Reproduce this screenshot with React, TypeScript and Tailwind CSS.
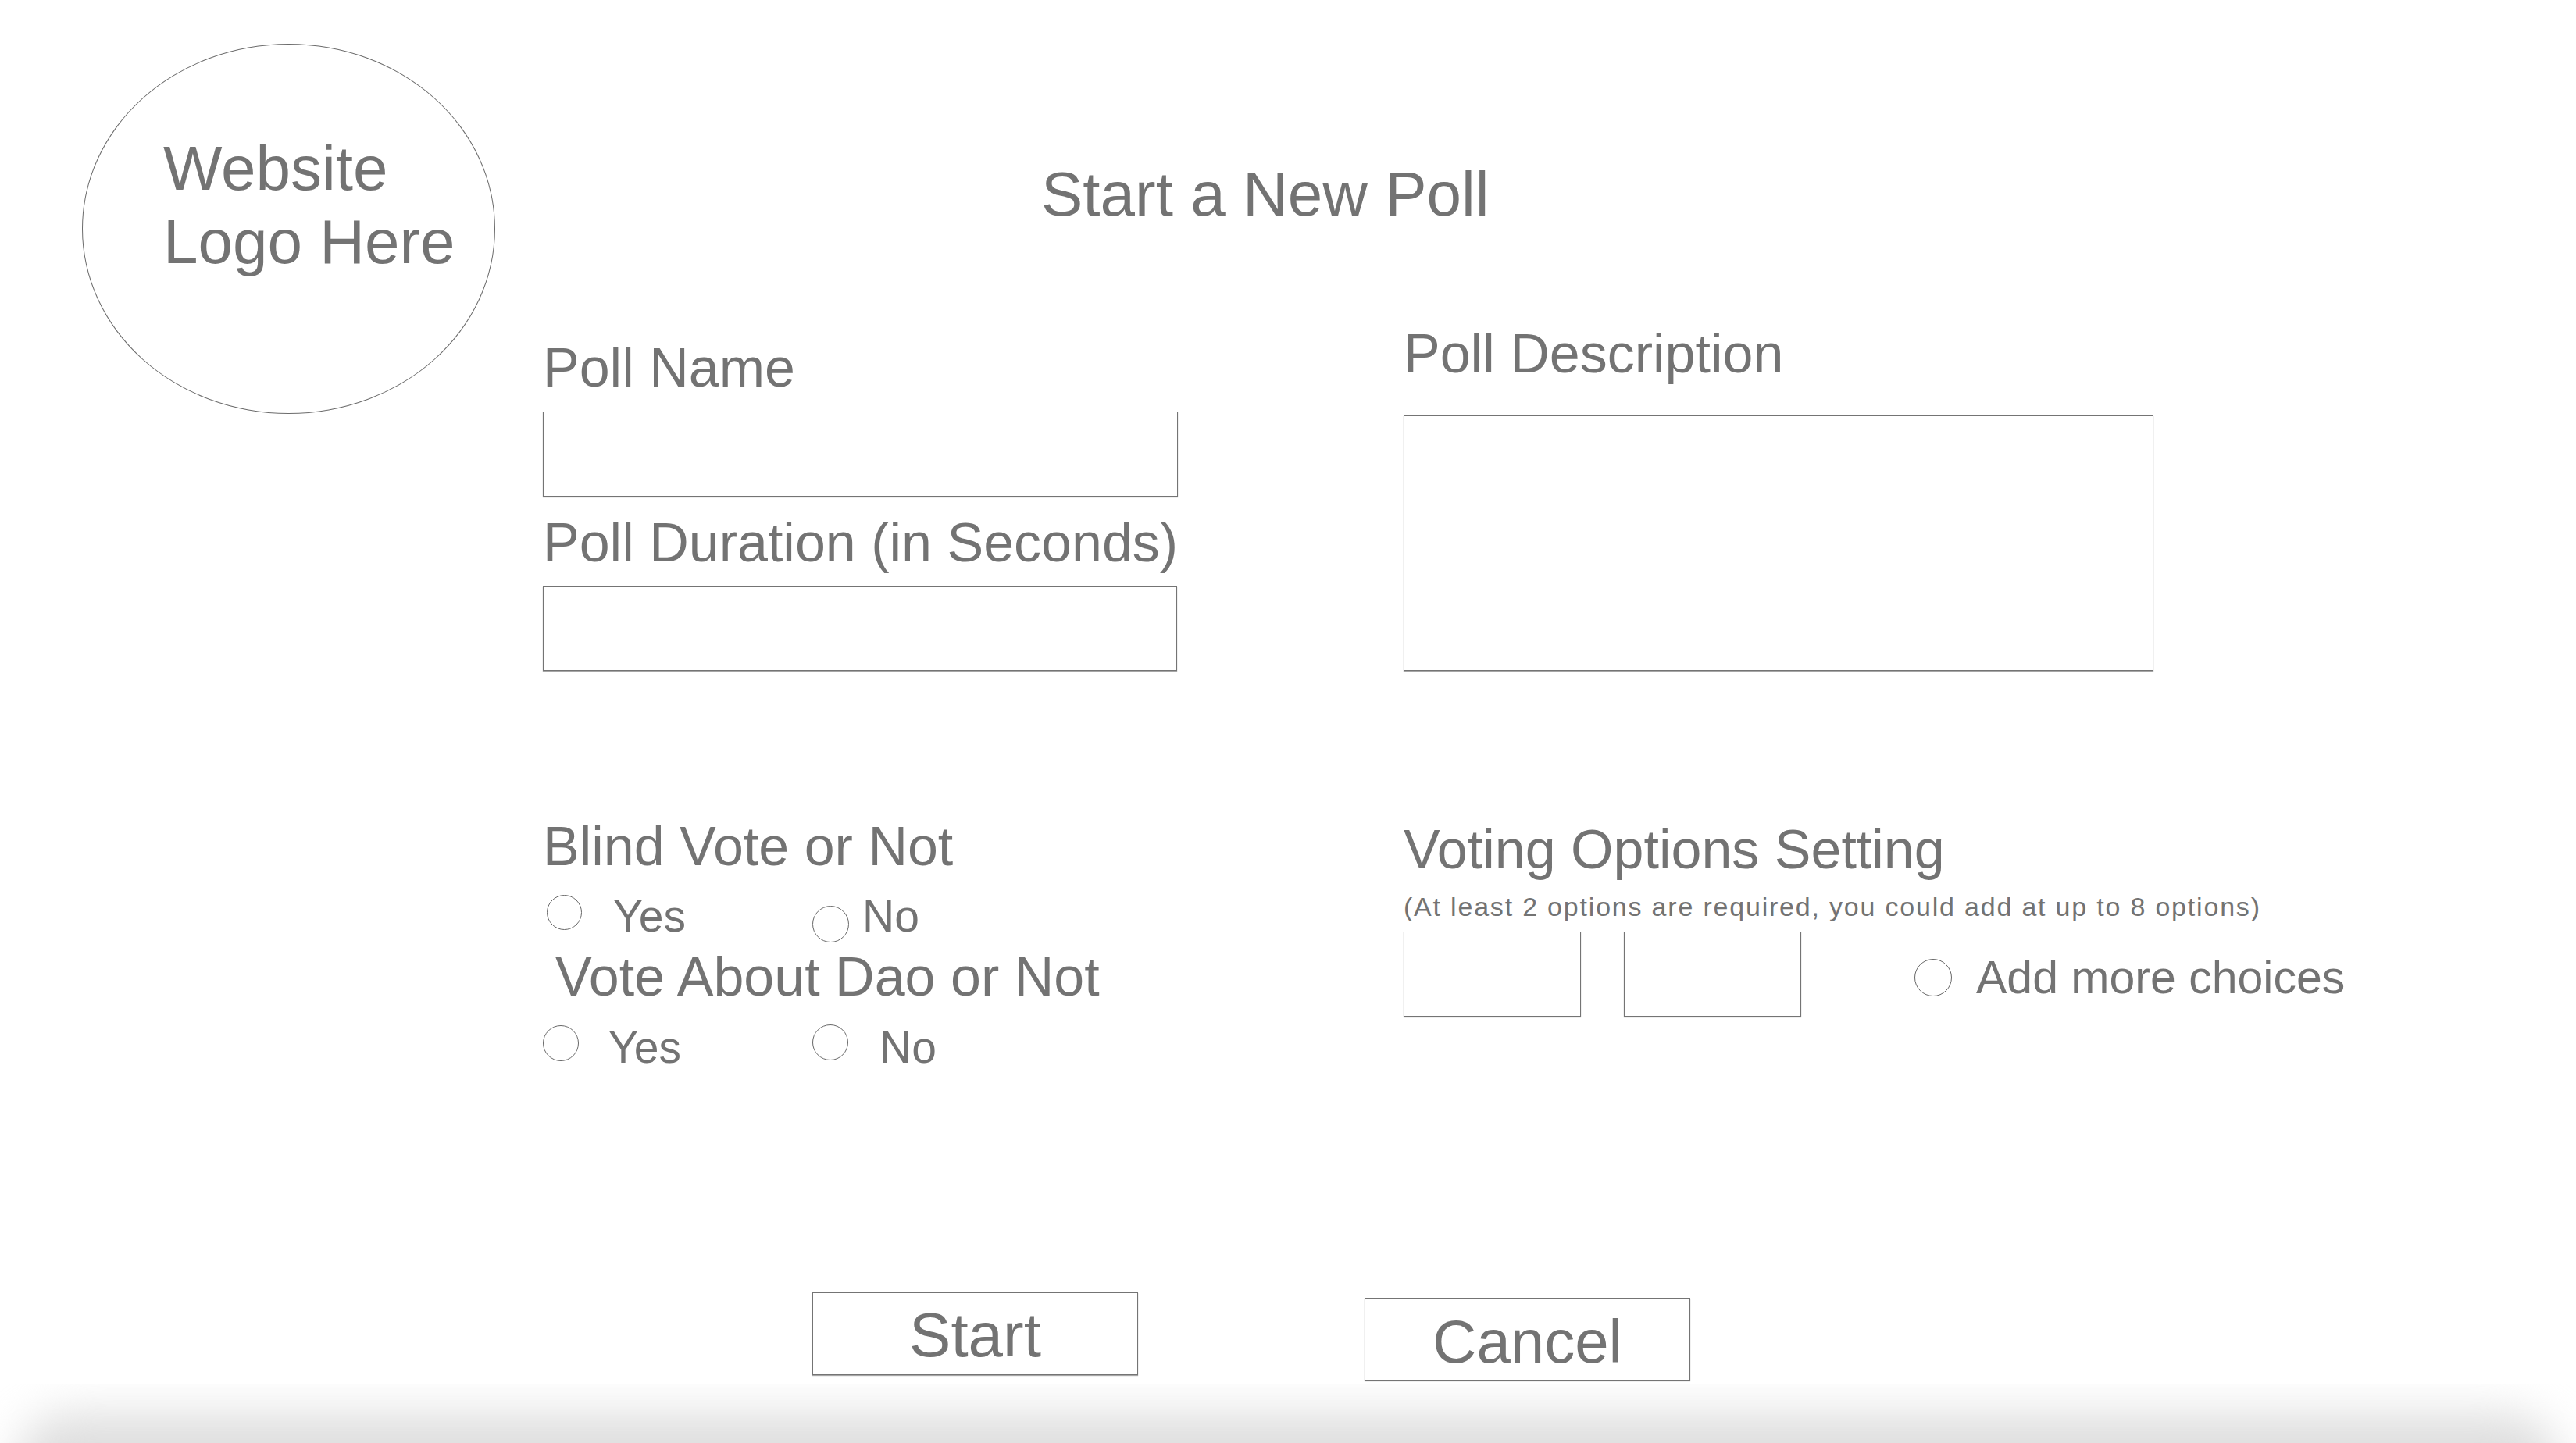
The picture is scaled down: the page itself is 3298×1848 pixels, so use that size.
import React from 'react'

const box = 'block border border-[#747474] bg-white shadow-[0_1px_1px_rgba(0,0,0,0.35)] outline-none'
const radio = 'block shrink-0 appearance-none rounded-full border-[1.5px] border-[#686868] bg-white'

function Logo() {
  return (
    <div className="shrink-0 pl-[105px] pt-[56px]">
      <div className="h-[474px] w-[529px] rounded-[50%] border-[1.5px] border-[#6c6c6c] pl-[103px] pt-[112px] text-[80px] leading-[94px]">
        Website
        <br />
        Logo Here
      </div>
    </div>
  )
}

function RadioRow({ name, yes, no, className = '' }: {
  name: string
  yes: { circle: string; size: string; text: string }
  no: { circle: string; size: string; text: string }
  className?: string
}) {
  return (
    <div className={`flex items-start text-[57px] leading-[64px] ${className}`}>
      <label className="flex w-[345px] items-start">
        <input type="radio" name={name} className={`${radio} ${yes.size} ${yes.circle}`} />
        <span className={yes.text}>Yes</span>
      </label>
      <label className="flex items-start">
        <input type="radio" name={name} className={`${radio} ${no.size} ${no.circle}`} />
        <span className={no.text}>No</span>
      </label>
    </div>
  )
}

export default function App() {
  return (
    <div className="flex h-[1848px] w-full flex-col overflow-hidden bg-white font-['Liberation_Sans',Arial,sans-serif] text-[#737373]">
      <div className="flex flex-1">
        <Logo />

        <div className="ml-[61px] flex flex-col pt-[209px]">
          <h1 className="ml-[638px] text-[80px] font-normal leading-[80px]">Start a New Poll</h1>

          {/* name / duration / description */}
          <div className="mt-[124px] flex gap-[289px]">
            <div className="flex w-[813px] flex-col">
              <label className="mt-[18px] text-[70px] leading-[80px]">Poll Name</label>
              <input className={`${box} mt-[16px] h-[109px] w-[813px]`} />
              <label className="mt-[19px] whitespace-nowrap text-[70px] leading-[80px]">Poll Duration (in Seconds)</label>
              <input className={`${box} mt-[16px] h-[108px] w-[812px]`} />
            </div>
            <div className="flex flex-col">
              <label className="text-[70px] leading-[80px]">Poll Description</label>
              <textarea className={`${box} mt-[39px] h-[327px] w-[960px] resize-none`} />
            </div>
          </div>

          {/* vote settings */}
          <div className="mt-[185px] flex gap-[289px]">
            <div className="flex w-[813px] flex-col">
              <div className="whitespace-nowrap text-[70px] leading-[80px]">Blind Vote or Not</div>
              <RadioRow
                name="blind"
                className="mt-[17px]"
                yes={{ circle: 'ml-[5px] mt-[5px]', size: 'h-[45px] w-[45px]', text: 'ml-[40px]' }}
                no={{ circle: 'mt-[19px]', size: 'h-[47px] w-[47px]', text: 'ml-[17px]' }}
              />
              <div className="ml-[16px] mt-[4px] whitespace-nowrap text-[70px] leading-[80px]">Vote About Dao or Not</div>
              <RadioRow
                name="dao"
                className="mt-[18px]"
                yes={{ circle: 'mt-[4px]', size: 'h-[46px] w-[46px]', text: 'ml-[38px]' }}
                no={{ circle: 'mt-[3px]', size: 'h-[46px] w-[46px]', text: 'ml-[40px]' }}
              />
            </div>

            <div className="flex flex-col">
              <div className="mt-[4px] whitespace-nowrap text-[70px] leading-[80px]">Voting Options Setting</div>
              <p className="mt-[13px] whitespace-nowrap text-[34px] leading-[40px] tracking-[1.8px]">
                (At least 2 options are required, you could add at up to 8 options)
              </p>
              <div className="mt-[12px] flex items-start">
                <input className={`${box} h-[109px] w-[227px]`} />
                <input className={`${box} ml-[55px] h-[109px] w-[227px]`} />
                <label className="ml-[145px] flex items-start">
                  <input type="radio" className={`${radio} mt-[35px] h-[48px] w-[48px]`} />
                  <span className="ml-[31px] mt-[26px] whitespace-nowrap text-[59px] leading-[66px]">Add more choices</span>
                </label>
              </div>
            </div>
          </div>

          {/* actions */}
          <div className="mt-[282px] flex items-start">
            <button className="ml-[345px] flex h-[106px] w-[417px] items-center justify-center border border-[#747474] bg-white pt-[4px] text-[80px] leading-[80px] shadow-[0_1px_1px_rgba(0,0,0,0.35)]">
              Start
            </button>
            <button className="ml-[290px] mt-[7px] flex h-[106px] w-[417px] items-center justify-center border border-[#747474] bg-white pt-[6px] text-[78px] leading-[80px] shadow-[0_1px_1px_rgba(0,0,0,0.35)]">
              Cancel
            </button>
          </div>
        </div>
      </div>

      {/* window shadow along the bottom edge */}
      <div className="h-[76px] shrink-0 overflow-hidden">
        <div className="mx-[20px] mt-[38px] h-[140px] rounded-[70px] bg-[#dedede] blur-[28px]" />
      </div>
    </div>
  )
}
